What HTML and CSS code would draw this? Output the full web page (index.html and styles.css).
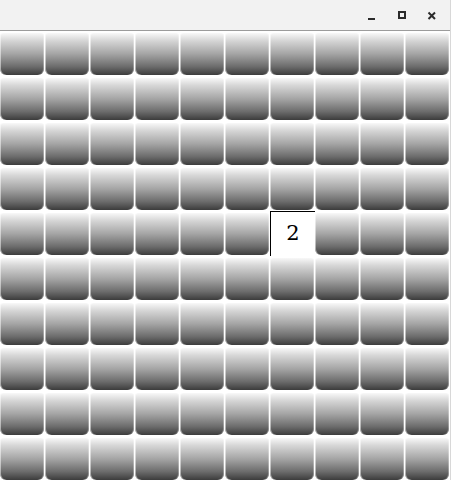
FILE: index.html
```html
<!DOCTYPE html>
<html>
<head>
<meta charset="utf-8">
<link rel="stylesheet" href="styles.css">
</head>
<body>
<div class="window">
  <div class="titlebar">
    <div class="controls">
      <span class="ctl"><svg width="10" height="10" viewBox="0 0 10 10"><rect x="1" y="7" width="7" height="2" fill="#2b2b2b"/></svg></span>
      <span class="ctl"><svg width="10" height="10" viewBox="0 0 10 10"><rect x="2" y="1" width="6" height="6" fill="none" stroke="#2b2b2b" stroke-width="2"/></svg></span>
      <span class="ctl"><svg width="10" height="10" viewBox="0 0 10 10"><path d="M1.5 1.5 L8 8 M8 1.5 L1.5 8" stroke="#2b2b2b" stroke-width="2"/></svg></span>
    </div>
  </div>
  <div class="grid" id="grid"></div>
</div>
<script src="script.js"></script>
</body>
</html>
```
FILE: script.js
```js
var g = document.getElementById('grid');
for (var r = 0; r < 10; r++) {
  for (var c = 0; c < 10; c++) {
    var cell = document.createElement('div');
    if (r === 4 && c === 6) {
      cell.className = 'cell open';
      cell.textContent = '2';
    } else {
      cell.className = 'cell';
      var b = document.createElement('div');
      b.className = 'btn';
      cell.appendChild(b);
    }
    g.appendChild(cell);
  }
}
```
FILE: styles.css
```css
html, body {
  margin: 0;
  padding: 0;
  background: #ffffff;
}
.window {
  width: 451px;
  height: 480px;
  overflow: hidden;
  background: #ffffff;
  box-sizing: border-box;
  border-right: 1px solid #d8d8d8;
}
.titlebar {
  height: 30px;
  background: #f2f2f2;
  border-bottom: 1px solid #9c9c9c;
  display: flex;
  justify-content: flex-end;
  align-items: center;
}
.controls {
  display: flex;
  gap: 20px;
  padding-right: 13px;
  padding-top: 2px;
}
.ctl {
  width: 10px;
  height: 10px;
  display: block;
}
.ctl svg {
  display: block;
}
.grid {
  display: grid;
  grid-template-columns: repeat(10, 45px);
  grid-auto-rows: 45px;
}
.cell {
  box-sizing: border-box;
  padding: 2px 1px 1px 0;
  display: flex;
}
.btn {
  flex: 1;
  border-radius: 3px 3px 6px 6px;
  background: linear-gradient(to bottom, #f8f8f8 0%, #d6d6d6 18%, #a4a4a4 50%, #6c6c6c 80%, #3c3c3c 100%);
  box-shadow: inset 1px 0 0 rgba(255,255,255,0.5), inset -1px 0 0 rgba(255,255,255,0.3);
}
.cell.open {
  padding: 0 0 2px 0;
  background: #ffffff;
  border-left: 1px solid #000;
  border-top: 1px solid #000;
  align-items: center;
  justify-content: center;
  font-family: "DejaVu Serif", "Liberation Serif", serif;
  font-size: 21px;
  color: #000;
}
```
